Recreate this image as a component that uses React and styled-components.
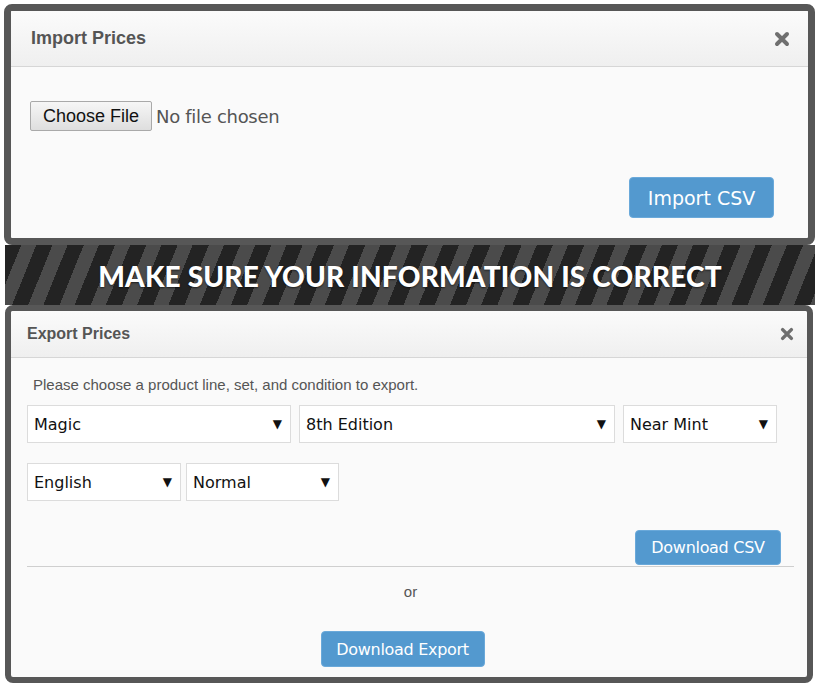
import React from 'react';
import styled, { createGlobalStyle } from 'styled-components';

const GlobalStyle = createGlobalStyle`
  html, body {
    margin: 0;
    padding: 0;
    background: #ffffff;
  }
`;

const Page = styled.div`
  width: 821px;
  height: 683px;
  overflow: hidden;
  padding: 4px 6px 0 4px;
  box-sizing: border-box;
  display: flex;
  flex-direction: column;
`;

const Panel = styled.div`
  border: ${p => p.$border || 7}px solid #575757;
  border-radius: 8px;
  background: #fafafa;
  display: flex;
  flex-direction: column;
  overflow: hidden;
  margin-left: ${p => p.$left || 0}px;
  margin-right: ${p => p.$right || 0}px;
  height: ${p => p.$height}px;
  box-sizing: border-box;
  flex-shrink: 0;
`;

const Header = styled.div`
  height: ${p => p.$height}px;
  flex-shrink: 0;
  display: flex;
  align-items: center;
  justify-content: space-between;
  padding: 0 ${p => p.$padRight}px 0 ${p => p.$padLeft}px;
  background: linear-gradient(#fbfbfb, #efefef);
  border-bottom: 1px solid #d6d6d6;
  box-sizing: border-box;
`;

const Title = styled.h2`
  margin: 0;
  font-family: "Liberation Sans", Arial, sans-serif;
  font-weight: bold;
  font-size: ${p => p.$size}px;
  color: #555555;
`;

const CloseIcon = ({ size }) => (
  <svg width={size} height={size} viewBox="0 0 16 16">
    <path d="M3 3 L13 13 M13 3 L3 13" stroke="#6f6f6f" strokeWidth="4" strokeLinecap="round" />
  </svg>
);

const ImportBody = styled.div`
  flex: 1;
  display: flex;
  flex-direction: column;
  padding: 34px 34px 0 19px;
`;

const FileRow = styled.div`
  display: flex;
  align-items: center;
  gap: 4px;
`;

const FileButton = styled.button`
  height: 30px;
  width: 122px;
  padding: 0;
  font-family: "Liberation Sans", Arial, sans-serif;
  font-size: 18px;
  color: #111;
  background: linear-gradient(#f6f6f6, #dedede);
  border: 1px solid #a9a9a9;
  border-radius: 2px;
`;

const FileStatus = styled.span`
  font-family: "DejaVu Sans", Verdana, sans-serif;
  font-size: 18px;
  color: #555555;
  letter-spacing: -0.3px;
`;

const BlueButton = styled.button`
  height: ${p => p.$h}px;
  width: ${p => p.$w}px;
  padding: 0;
  background: #5399cf;
  border: 1px solid #6aa9da;
  border-radius: 4px;
  color: #ffffff;
  font-family: "DejaVu Sans", Verdana, sans-serif;
  font-size: ${p => p.$size}px;
  letter-spacing: ${p => p.$ls || 0}px;
`;

const RightRow = styled.div`
  display: flex;
  justify-content: flex-end;
  margin-top: ${p => p.$top}px;
  padding-right: ${p => p.$right || 0}px;
`;

const Banner = styled.div`
  height: 60px;
  flex-shrink: 0;
  margin: 0 0 0 1px;
  display: flex;
  align-items: center;
  justify-content: center;
  padding-top: 2px;
  box-sizing: border-box;
  background: repeating-linear-gradient(
    112deg,
    #232323 0px,
    #232323 15px,
    #4b4b4b 15px,
    #4b4b4b 29px
  );
`;

const BannerText = styled.span`
  font-family: Lato, "Open Sans", sans-serif;
  font-weight: 900;
  font-size: 28px;
  color: #ffffff;
  letter-spacing: 0.2px;
  text-shadow: 0 1px 2px rgba(0, 0, 0, 0.6);
`;

const ExportBody = styled.div`
  flex: 1;
  display: flex;
  flex-direction: column;
  padding: 18px 13px 0 16px;
`;

const Hint = styled.p`
  margin: 0 0 12px 6px;
  font-family: "Liberation Sans", Arial, sans-serif;
  font-size: 15px;
  color: #555555;
`;

const SelectRow = styled.div`
  display: flex;
  gap: ${p => p.$gap}px;
  margin-bottom: ${p => p.$bottom}px;
`;

const Select = styled.div`
  width: ${p => p.$w}px;
  height: 38px;
  box-sizing: border-box;
  background: #ffffff;
  border: 1px solid #dcdcdc;
  display: flex;
  align-items: center;
  justify-content: space-between;
  padding: 0 8px 0 6px;
  font-family: "DejaVu Sans", Verdana, sans-serif;
  font-size: 16px;
  color: #111111;
`;

const Arrow = styled.span`
  font-size: 12px;
  color: #111;
`;

const Divider = styled.hr`
  margin: 1px 0 0 0;
  border: 0;
  border-top: 1px solid #cfcfcf;
`;

const Or = styled.div`
  margin-top: 16px;
  text-align: center;
  font-family: "Liberation Sans", Arial, sans-serif;
  font-size: 15px;
  color: #555555;
`;

const CenterRow = styled.div`
  display: flex;
  justify-content: center;
  margin-top: 31px;
  padding-right: 16px;
`;

const SelectBox = ({ w, children }) => (
  <Select $w={w}>
    <span>{children}</span>
    <Arrow>▼</Arrow>
  </Select>
);

export default function App() {
  return (
    <>
      <GlobalStyle />
      <Page>
        <Panel $height={241}>
          <Header $height={56} $padLeft={20} $padRight={18}>
            <Title $size={18}>Import Prices</Title>
            <CloseIcon size={16} />
          </Header>
          <ImportBody>
            <FileRow>
              <FileButton>Choose File</FileButton>
              <FileStatus>No file chosen</FileStatus>
            </FileRow>
            <RightRow $top={46}>
              <BlueButton $w={145} $h={41} $size={19}>Import CSV</BlueButton>
            </RightRow>
          </ImportBody>
        </Panel>
        <Banner>
          <BannerText>MAKE SURE YOUR INFORMATION IS CORRECT</BannerText>
        </Banner>
        <Panel $height={378} $border={6} $left={1} $right={2}>
          <Header $height={47} $padLeft={16} $padRight={13}>
            <Title $size={16}>Export Prices</Title>
            <CloseIcon size={14} />
          </Header>
          <ExportBody>
            <Hint>Please choose a product line, set, and condition to export.</Hint>
            <SelectRow $gap={8} $bottom={20}>
              <SelectBox w={264}>Magic</SelectBox>
              <SelectBox w={316}>8th Edition</SelectBox>
              <SelectBox w={154}>Near Mint</SelectBox>
            </SelectRow>
            <SelectRow $gap={5} $bottom={29}>
              <SelectBox w={154}>English</SelectBox>
              <SelectBox w={153}>Normal</SelectBox>
            </SelectRow>
            <RightRow $right={13} $top={0}>
              <BlueButton $w={146} $h={35} $size={16} $ls={-0.3}>Download CSV</BlueButton>
            </RightRow>
            <Divider />
            <Or>or</Or>
            <CenterRow>
              <BlueButton $w={164} $h={36} $size={16} $ls={-0.3}>Download Export</BlueButton>
            </CenterRow>
          </ExportBody>
        </Panel>
      </Page>
    </>
  );
}
